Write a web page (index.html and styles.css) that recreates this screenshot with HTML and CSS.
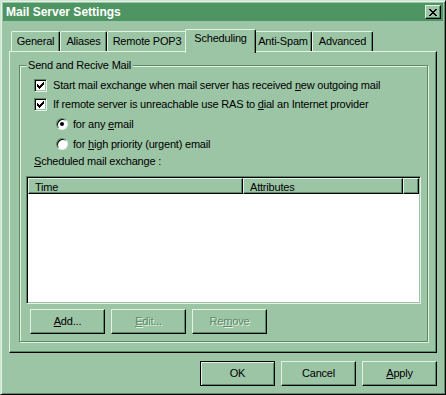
FILE: index.html
```html
<!DOCTYPE html>
<html>
<head>
    <meta charset="utf-8"/>
    <link rel="stylesheet" href="styles.css">
</head>
<body>
<div class="window">
    <div class="titlebar">
        <span class="title">Mail Server Settings</span>
        <div class="close">
            <svg width="8" height="7" viewBox="0 0 8 7"><path d="M0 0h2v1h-2zM6 0h2v1h-2zM1 1h2v1h-2zM5 1h2v1h-2zM2 2h4v1h-4zM3 3h2v1h-2zM2 4h4v1h-4zM1 5h2v1h-2zM5 5h2v1h-2zM0 6h2v1h-2zM6 6h2v1h-2z" fill="#000"/></svg>
        </div>
    </div>
    <div class="content">
        <div class="tabs">
            <div class="tab tab-general">General</div>
            <div class="tab tab-aliases">Aliases</div>
            <div class="tab tab-pop3">Remote POP3</div>
            <div class="tab tab-scheduling active">Scheduling</div>
            <div class="tab tab-antispam">Anti-Spam</div>
            <div class="tab tab-advanced">Advanced</div>
        </div>
        <div class="panel">
            <div class="group">
                <div class="group-title">Send and Recive Mail</div>
                <div class="group-body">
                    <div class="option first">
                        <span class="checkbox"><svg width="7" height="7" viewBox="0 0 7 7"><path d="M6 0h1v3h-1zM5 1h1v3h-1zM4 2h1v3h-1zM3 3h1v3h-1zM2 4h1v3h-1zM1 3h1v3h-1zM0 2h1v3h-1z" fill="#000"/></svg></span>
                        <span>Start mail exchange when mail server has received <u>n</u>ew outgoing mail</span>
                    </div>
                    <div class="option">
                        <span class="checkbox"><svg width="7" height="7" viewBox="0 0 7 7"><path d="M6 0h1v3h-1zM5 1h1v3h-1zM4 2h1v3h-1zM3 3h1v3h-1zM2 4h1v3h-1zM1 3h1v3h-1zM0 2h1v3h-1z" fill="#000"/></svg></span>
                        <span>If remote server is unreachable use RAS to <u>d</u>ial an Internet provider</span>
                    </div>
                    <div class="option radio-row">
                        <span class="radio checked"></span>
                        <span>for any <u>e</u>mail</span>
                    </div>
                    <div class="option radio-row">
                        <span class="radio"></span>
                        <span>for <u>h</u>igh priority (urgent) email</span>
                    </div>
                    <div class="list-label"><u>S</u>cheduled mail exchange :</div>
                    <div class="list">
                        <div class="list-head">
                            <div class="col col-time">Time</div>
                            <div class="col col-attr">Attributes</div>
                            <div class="col col-rest"></div>
                        </div>
                        <div class="list-body"></div>
                    </div>
                    <div class="list-buttons">
                        <div class="btn"><u>A</u>dd...</div>
                        <div class="btn disabled"><u>E</u>dit...</div>
                        <div class="btn disabled">Re<u>m</u>ove</div>
                    </div>
                </div>
            </div>
        </div>
        <div class="dialog-buttons">
            <div class="btn default">OK</div>
            <div class="btn">Cancel</div>
            <div class="btn"><u>A</u>pply</div>
        </div>
    </div>
</div>
</body>
</html>
```

FILE: styles.css
```css
body {
    margin: 0;
    background: #9cc5a5;
}

.window {
    width: 446px;
    height: 395px;
    box-sizing: border-box;
    padding: 2px;
    border: 1px solid;
    border-color: #cfe5d3 #000 #000 #cfe5d3;
    box-shadow: inset 1px 1px 0 #e4f2e6, inset -1px -1px 0 #5a8a66;
    background: #9cc5a5;
    font-family: 'Liberation Sans', Arial, sans-serif;
    font-size: 11px;
    line-height: 13px;
    letter-spacing: -0.2px;
    color: #000;
}

.window u {
    text-decoration: underline;
    text-underline-offset: 1px;
}

.titlebar {
    height: 18px;
    background: #4f9563;
    display: flex;
    align-items: center;
    justify-content: space-between;
}

.titlebar .title {
    color: #fff;
    font-size: 12px;
    font-weight: bold;
    letter-spacing: 0;
    padding-left: 3px;
}

.titlebar .close {
    width: 16px;
    height: 14px;
    box-sizing: border-box;
    margin-right: 2px;
    background: #9cc5a5;
    border: 1px solid;
    border-color: #e4f2e6 #000 #000 #e4f2e6;
    box-shadow: inset -1px -1px 0 #5a8a66;
    display: flex;
    align-items: center;
    justify-content: center;
}

.close svg {
    display: block;
    margin: 0 0 0 -1px;
}

.content {
    margin: 0 6px;
}

.tabs {
    display: flex;
    align-items: flex-end;
    height: 22px;
    margin-top: 8px;
    padding-left: 2px;
}

.tab {
    height: 20px;
    box-sizing: border-box;
    padding-top: 3px;
    text-align: center;
    border-top: 1px solid #e4f2e6;
    border-left: 1px solid #e4f2e6;
    border-right: 1px solid #000;
    border-radius: 2px 2px 0 0;
    box-shadow: inset -1px 0 0 #5a8a66;
}

.tab-general { width: 49px; }
.tab-aliases { width: 47px; }
.tab-pop3 { width: 80px; }
.tab-scheduling { width: 67px; }
.tab-antispam { width: 58px; }
.tab-advanced { width: 61px; }

.tab.active {
    width: 71px;
    height: 24px;
    margin: 0 -2px -2px -2px;
    padding-top: 2px;
    background: #9cc5a5;
    position: relative;
    z-index: 1;
}

.panel {
    height: 302px;
    box-sizing: border-box;
    border: 1px solid;
    border-color: #e4f2e6 #000 #000 #e4f2e6;
    box-shadow: inset -1px -1px 0 #5a8a66;
    padding: 13px 8px 0 9px;
}

.group {
    border: 1px solid #5a8a66;
    box-shadow: inset 1px 1px 0 #e4f2e6, 1px 1px 0 #e4f2e6;
}

.group-title {
    width: fit-content;
    margin: -7px 0 0 6px;
    padding: 0 2px;
    background: #9cc5a5;
}

.group-body {
    padding: 4px 6px 7px 6px;
}

.option {
    height: 19px;
    display: flex;
    align-items: center;
    padding-left: 8px;
    gap: 6px;
}

.option.radio-row {
    height: 20px;
    padding-left: 30px;
    gap: 5px;
}

.checkbox {
    width: 13px;
    height: 13px;
    box-sizing: border-box;
    background: #fff;
    border: 1px solid;
    border-color: #5a8a66 #e4f2e6 #e4f2e6 #5a8a66;
    box-shadow: inset 1px 1px 0 #000, inset -1px -1px 0 #9cc5a5;
    display: flex;
    align-items: center;
    justify-content: center;
}

.checkbox svg {
    display: block;
}

.radio {
    width: 12px;
    height: 12px;
    box-sizing: border-box;
    border-radius: 50%;
    background: #fff;
    border: 1px solid;
    border-color: #5a8a66 #e4f2e6 #e4f2e6 #5a8a66;
    box-shadow: inset 1px 1px 0 #000;
    display: flex;
    align-items: center;
    justify-content: center;
}

.radio.checked::after {
    content: "";
    width: 4px;
    height: 4px;
    border-radius: 50%;
    background: #000;
}

.list-label {
    margin-top: 1px;
    padding-left: 8px;
}

.list {
    margin-top: 8px;
    height: 128px;
    box-sizing: border-box;
    border: 1px solid;
    border-color: #5a8a66 #e4f2e6 #e4f2e6 #5a8a66;
    box-shadow: inset 1px 1px 0 #000, inset -1px -1px 0 #9cc5a5;
    padding: 1px;
    display: flex;
    flex-direction: column;
}

.list-head {
    display: flex;
    height: 16px;
}

.list-head .col {
    box-sizing: border-box;
    padding: 2px 0 0 6px;
    border-top: 1px solid #e4f2e6;
    border-left: 1px solid #e4f2e6;
    border-right: 1px solid #000;
    border-bottom: 1px solid #000;
    box-shadow: inset -1px -1px 0 #5a8a66;
}

.col-time {
    width: 215px;
}

.col-attr {
    width: 160px;
}

.col-rest {
    flex: 1;
}

.list-body {
    flex: 1;
    background: #fff;
}

.list-buttons {
    display: flex;
    gap: 6px;
    margin-top: 5px;
    padding-left: 4px;
}

.btn {
    width: 75px;
    height: 25px;
    box-sizing: border-box;
    border: 1px solid;
    border-color: #e4f2e6 #000 #000 #e4f2e6;
    box-shadow: inset -1px -1px 0 #5a8a66;
    display: flex;
    align-items: center;
    justify-content: center;
}

.btn.disabled {
    color: #5a8a66;
    text-shadow: 1px 1px 0 #e4f2e6;
}

.btn.default {
    border-color: #000;
    box-shadow: inset 1px 1px 0 #e4f2e6, inset -1px -1px 0 #5a8a66;
}

.dialog-buttons {
    display: flex;
    justify-content: flex-end;
    gap: 6px;
    margin-top: 8px;
}
```
